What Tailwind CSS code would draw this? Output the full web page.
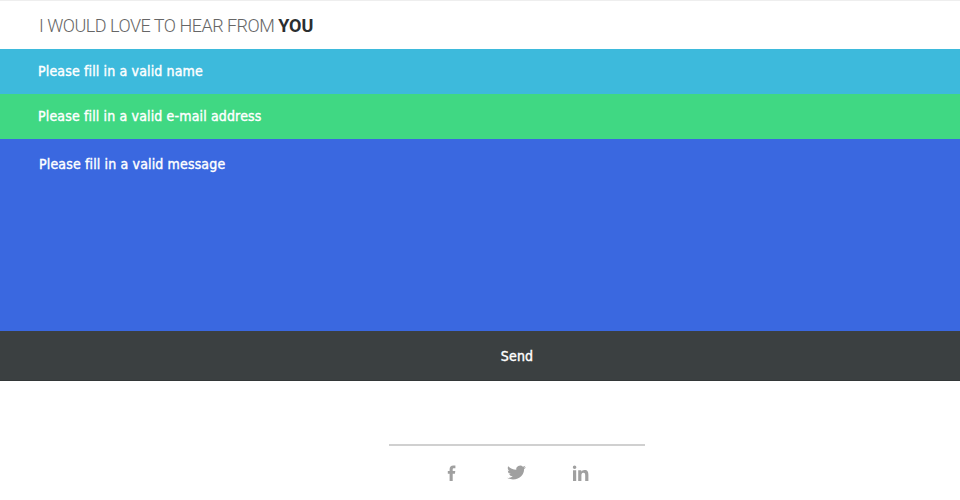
<!DOCTYPE html>
<html lang="en">

<head>
  <meta charset="UTF-8">
  <meta name="viewport" content="width=device-width, initial-scale=1.0">
  <title>Contact</title>
  <script src="https://cdn.jsdelivr.net/npm/@tailwindcss/browser@4"></script>
</head>

<body class="bg-white h-[500px] overflow-hidden font-['DejaVu_Sans',sans-serif]">
  <!-- Heading -->
  <div class="h-[49px] border-t border-[#eeeeee] pl-[39px] flex items-center">
    <h1 class="font-['Roboto',sans-serif] font-light text-[18px] tracking-[-0.5px] text-[#666666]">I WOULD LOVE TO HEAR FROM <strong class="font-bold tracking-normal text-[#2b2e30]">YOU</strong></h1>
  </div>

  <!-- Form -->
  <form class="flex flex-col text-white text-[14px] font-['DejaVu_Sans_Condensed','DejaVu_Sans',sans-serif] tracking-[0.15px] [-webkit-text-stroke:0.4px_white]">
    <div class="h-[45px] bg-[#3dbadc] pl-[38px] flex items-center">Please fill in a valid name</div>
    <div class="h-[45px] bg-[#40d883] pl-[38px] flex items-center">Please fill in a valid e-mail address</div>
    <div class="h-[192px] bg-[#3a68e0] pl-[39px] pt-[15px]">Please fill in a valid message</div>
    <button type="button" class="h-[50px] bg-[#3b4041] text-white pl-[74px] pt-[2px] flex items-center justify-center border-b border-[#333738]">Send</button>
  </form>

  <!-- Social -->
  <div class="mt-[63px] ml-[389px] w-[256px] border-t-2 border-[#d0d0d0] pt-[18px] pl-[55px] flex items-center gap-[45px] text-[#a0a0a0]">
    <svg class="w-[18px] h-[16px]" viewBox="0 0 18 16" fill="currentColor"><path d="M5.600 16V8.800H3.800V6H5.600V4.300C5.600 1.800 6.900.500 9.300.500c.900 0 1.700.100 2.100.100v2.700H10c-1 0-1.300.500-1.300 1.200V6h2.600l-.400 2.800H8.700V16z"/></svg>
    <svg class="w-[19px] h-[17px]" viewBox="0 0 24 24" preserveAspectRatio="none" fill="currentColor"><path d="M23.950 4.570a10 10 0 0 1-2.820.770 4.960 4.960 0 0 0 2.160-2.720c-.950.550-2 .950-3.130 1.180a4.920 4.920 0 0 0-8.380 4.480C7.690 8.100 4.070 6.130 1.640 3.160a4.820 4.820 0 0 0-.670 2.480c0 1.710.870 3.210 2.190 4.100a4.900 4.900 0 0 1-2.230-.610v.060a4.920 4.920 0 0 0 3.950 4.830 5 5 0 0 1-2.210.080 4.940 4.940 0 0 0 4.600 3.420A9.870 9.870 0 0 1 0 19.540a14 14 0 0 0 7.560 2.210c9.050 0 14-7.500 14-13.980 0-.210 0-.420-.020-.630a9.940 9.940 0 0 0 2.460-2.550z"/></svg>
    <svg class="w-[17px] h-[16px] ml-[1px]" viewBox="0 0 17 16" fill="currentColor"><path d="M1 5.200h3.200V16H1zM2.600.400a1.800 1.800 0 1 1 0 3.600 1.800 1.800 0 0 1 0-3.600zM6.200 5.200h3.100v1.500c.500-.900 1.600-1.700 3.200-1.700 3.300 0 3.900 2.100 3.900 4.900V16h-3.200v-5.300c0-1.300 0-2.900-1.800-2.900s-2 1.400-2 2.800V16H6.200z"/></svg>
  </div>
</body>

</html>
